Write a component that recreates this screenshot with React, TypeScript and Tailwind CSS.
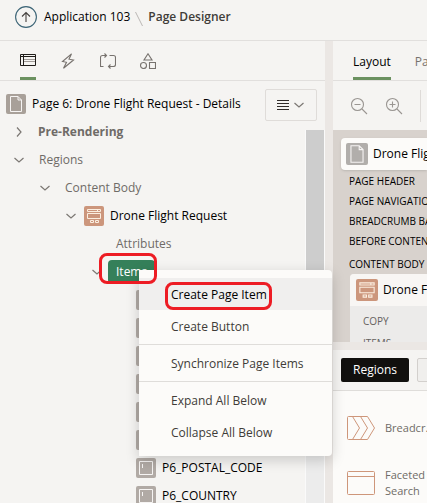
import type { ReactNode } from "react";

const line = { fill: "none", stroke: "currentColor" } as const;

function Chevron({ open }: { open: boolean }) {
  return (
    <svg className="block size-3 text-[#7b7773]" viewBox="0 0 12 12" {...line} strokeWidth="1.2">
      <path d={open ? "M1.5 4 6 8 10.5 4" : "M4 1.5 8 6 4 10.5"} />
    </svg>
  );
}

function PageIcon({ className }: { className: string }) {
  return (
    <svg className={`block shrink-0 rounded-xs text-[#f6f4f3] ${className}`} viewBox="0 0 20 20" {...line}>
      <path d="M4.500 2.500h7.500l3.500 3.500v11.500h-11zM12 2.500v3.500h3.500" />
    </svg>
  );
}

function RegionIcon({ className }: { className: string }) {
  return (
    <svg className={`block shrink-0 rounded-xs bg-[#cc967c] text-[#fbeee0] ${className}`} viewBox="0 0 20 20" {...line}>
      <path d="M3.500 3.500h13v2h-13zM13.500 3.500v2M3.500 7.500h13v5h-13zM6.500 14.500h3v2h-3zM11.500 14.500h3v2h-3z" />
    </svg>
  );
}

function FieldIcon() {
  return (
    <svg className="block size-5 shrink-0 rounded-xs bg-[#b1aaa5] text-[#f6f4f3]" viewBox="0 0 20 20" {...line}>
      <path d="M3.500 3.500h13v13h-13zM6.500 6v4" />
    </svg>
  );
}

function TreeRow({ indent, children }: { indent: string; children: ReactNode }) {
  return <li className={`flex h-7 items-center whitespace-nowrap ${indent}`}>{children}</li>;
}

const fields = ["", "", "", "", "", "", "P6_POSTAL_CODE", "P6_COUNTRY"];
const slots = ["PAGE HEADER", "PAGE NAVIGATION", "BREADCRUMB BAR", "BEFORE CONTENT BODY"];

function Header() {
  return (
    <header className="flex h-[41px] shrink-0 items-center border-b border-[#e1dfdd] pb-1.5 pl-[15px] whitespace-nowrap">
      <button aria-label="Up" className="text-[#3c6476]">
        <svg className="block size-[22px]" viewBox="0 0 22 22" {...line} strokeWidth="1.1">
          <circle cx="11" cy="11" r="10.4" />
          <path stroke="#45413e" d="M11 16V6.500M7 10.500l4-4 4 4" />
        </svg>
      </button>
      <a href="#app" className="ml-[7px] text-black">Application 103</a>
      <svg className="mx-[5px] mt-1 h-4 w-2 shrink-0" viewBox="0 0 8 16" {...line} stroke="#bab7b4">
        <path d="M.5 1 7.500 15" />
      </svg>
      <span className="font-semibold text-[#403c38]">Page Designer</span>
    </header>
  );
}

function TreePanel() {
  const toggle = "w-[26px] shrink-0";
  return (
    <section className="flex w-[325px] shrink-0 flex-col overflow-hidden">
      <nav className="flex h-10 shrink-0 gap-6 border-b border-[#e1dfdd] pl-5 text-[#77726e]">
        <button aria-label="Rendering" className="h-[39px] w-4 border-b-3 border-[#6b9160] pt-0.5 text-[#201d1a]">
          <svg className="block size-4" viewBox="0 0 16 16" {...line}>
            <path d="M.5 2.500h15v11H.5zM.5 4.500h15M3.500 2.500v11" />
            <path stroke="#a09b97" d="M4 7.500h11M4 9.500h11" />
          </svg>
        </button>
        <button aria-label="Dynamic Actions" className="w-4">
          <svg className="block size-4" viewBox="0 0 16 16" {...line} strokeWidth="1.1">
            <path d="M11.500.8 2.500 8.500l4 .8-3 5.900 10-8.200-4.500-.8z" />
          </svg>
        </button>
        <button aria-label="Processing" className="w-4">
          <svg className="block size-4" viewBox="0 0 16 16" {...line} strokeWidth="1.1">
            <path d="M3.500 13.500h-3v-9q0-2 2-2h4M4.500.5l2 2-2 2M9.500 2.500h4q2 0 2 2v7q0 2-2 2h-5M10.500 11.500l-2 2 2 2" />
          </svg>
        </button>
        <button aria-label="Page Shared Components" className="w-4">
          <svg className="block size-4" viewBox="0 0 16 16" {...line} strokeWidth="1.1">
            <path d="M8 .8 12 7H4zM9.500 9.500h6v6h-6z" />
            <circle cx="3.500" cy="12.500" r="3" />
          </svg>
        </button>
      </nav>
      <div className="flex min-h-0 flex-1">
        <ul className="min-w-0 flex-1 pt-[9px] text-[#6f6b67]">
          <TreeRow indent="pl-1.5">
            <PageIcon className="size-5 bg-[#a8a099]" />
            <span className="ml-1.5 text-black">Page 6: Drone Flight Request - Details</span>
          </TreeRow>
          <TreeRow indent="pl-[13px]">
            <button aria-label="Expand" className="w-[25px] shrink-0"><Chevron open={false} /></button>
            <span className="font-bold">Pre-Rendering</span>
          </TreeRow>
          <TreeRow indent="pl-[13px]">
            <button aria-label="Collapse" className={toggle}><Chevron open /></button>Regions
          </TreeRow>
          <TreeRow indent="pl-[39px]">
            <button aria-label="Collapse" className={toggle}><Chevron open /></button>Content Body
          </TreeRow>
          <TreeRow indent="pl-[65px]">
            <button aria-label="Collapse" className="w-[19px] shrink-0"><Chevron open /></button>
            <RegionIcon className="size-5" />
            <span className="ml-1.5 text-black">Drone Flight Request</span>
          </TreeRow>
          <TreeRow indent="pl-[116px]">Attributes</TreeRow>
          <TreeRow indent="pl-[91px]">
            <button aria-label="Collapse" className="w-[17px] shrink-0"><Chevron open /></button>
            <span className="flex h-6 items-center rounded bg-[#35805a] px-2 text-white">Items</span>
          </TreeRow>
          {fields.map((name, i) => (
            <TreeRow key={i} indent="pl-[136px]">
              <FieldIcon />
              <span className="ml-1.5 text-black">{name}</span>
            </TreeRow>
          ))}
        </ul>
        <div className="flex w-[60px] shrink-0 flex-col gap-[9px] pt-2">
          <button aria-label="Tree options" className="flex h-8 w-[52px] shrink-0 items-center justify-center gap-1 rounded-xs border border-[#dfdcd9] text-[#302c29]">
            <svg className="size-3" viewBox="0 0 12 12" {...line}>
              <path d="M0 1.500h12M0 4.500h12M0 7.500h12M0 10.500h12" />
            </svg>
            <Chevron open />
          </button>
          <div className="w-5 flex-1 self-end border-x border-[#fafafa] bg-[#ececec]">
            <div className="h-4/5 bg-[#cdcdcd]" />
          </div>
        </div>
      </div>
    </section>
  );
}

function Zoom({ plus }: { plus?: boolean }) {
  return (
    <button aria-label={plus ? "Zoom in" : "Zoom out"} className="text-[#9a9692]">
      <svg className="block size-[18px]" viewBox="0 0 18 18" {...line} strokeWidth="1.1">
        <circle cx="7.500" cy="7.500" r="6" />
        <path d={plus ? "M12 12l5 5M4.500 7.500h6M7.500 4.500v6" : "M12 12l5 5M4.500 7.500h6"} />
      </svg>
    </button>
  );
}

function LayoutPanel() {
  return (
    <section className="flex min-w-0 flex-1 flex-col overflow-hidden whitespace-nowrap">
      <nav className="flex h-10 shrink-0 gap-6 border-b border-[#e1dfdd] pl-5">
        <button className="h-[39px] border-b-3 border-[#6b9160] pt-1.5 text-black">Layout</button>
        <button className="h-[39px] border-b-3 border-transparent pt-1.5 text-[#77726e]">Page Search</button>
      </nav>
      <div className="flex h-[49px] shrink-0 items-center gap-[17px] pl-[17px]">
        <Zoom />
        <Zoom plus />
        <div className="h-8 w-px shrink-0 bg-[#dedbd8]" />
      </div>
      <div className="h-[212px] shrink-0 overflow-hidden bg-[#d8d2cd] pt-2 pl-2 text-black">
        <div className="flex h-8 items-center rounded-l bg-[#fcfbf9] pl-[5px] shadow-sm">
          <PageIcon className="size-[22px] bg-[#b1aeab]" />
          <span className="ml-[5px]">Drone Flight Request - Details</span>
        </div>
        <ul className="pt-px pl-2 text-[10px] leading-5">
          {slots.map((slot) => <li key={slot}>{slot}</li>)}
          <li className="pt-[3px]">CONTENT BODY</li>
        </ul>
        <div className="ml-[9px] rounded-l bg-[#ecebea]">
          <div className="flex h-8 items-center rounded-tl bg-[#f8f6f4] pl-1.5">
            <RegionIcon className="size-[22px]" />
            <span className="ml-[5px]">Drone Flight Request</span>
          </div>
          <ul className="pt-1 pl-[13px] text-[10px] leading-[22px] text-[#65615d]">
            <li>COPY</li>
            <li>ITEMS</li>
          </ul>
        </div>
      </div>
      <div className="h-2 shrink-0 bg-[#ebe7e4]" />
      <div className="flex h-[41px] shrink-0 items-center gap-2 border-b border-[#dfddda] pl-2">
        <button className="h-6 w-[68px] shrink-0 rounded-xs bg-[#11100e] text-white">Regions</button>
        <button className="h-6 shrink-0 rounded-xs border border-[#d3d0cd] bg-[#f0efed] px-3">Items</button>
      </div>
      <ul className="flex-1 bg-[#fcfbf9] text-[11px] leading-4 text-[#6f6b67]">
        <li className="flex h-[74px] items-center gap-2.5 pl-[14px]">
          <svg className="h-6 w-7 shrink-0 text-[#ce967a]" viewBox="0 0 28 24" {...line}>
            <path d="M1.500.5h19l7 11.500-7 11.500h-19q-1 0-1-1v-21q0-1 1-1zM5.500.5l7 11.500-7 11.500M13.500.5l7 11.500-7 11.500" />
          </svg>
          Breadcr...
        </li>
        <li className="flex h-9 items-center gap-2.5 pl-[14px]">
          <svg className="h-6 w-7 shrink-0 text-[#ce967a]" viewBox="0 0 28 24" {...line}>
            <rect x=".5" y=".5" width="27" height="23" rx="1" />
            <path d="M.5 5.500h27" />
          </svg>
          <span>Faceted<br />Search</span>
        </li>
      </ul>
    </section>
  );
}

function ContextMenu() {
  const item = "block h-8 w-full pt-0.5 pl-8 text-left";
  const rule = "my-0.5 border-[#dfddda]";
  return (
    <div role="menu" className="absolute top-[270px] left-[139px] w-[193px] rounded-r bg-[#fcfbf9] py-2 text-[#403c38] shadow-[0_4px_14px_rgba(0,0,0,0.18)]">
      <button role="menuitem" className={`${item} bg-[#f0efee] text-black`}>Create Page Item</button>
      <button role="menuitem" className={item}>Create Button</button>
      <hr className={rule} />
      <button role="menuitem" className={item}>Synchronize Page Items</button>
      <hr className={rule} />
      <button role="menuitem" className={item}>Expand All Below</button>
      <button role="menuitem" className={item}>Collapse All Below</button>
    </div>
  );
}

export default function App() {
  return (
    <div className="relative flex h-screen flex-col overflow-hidden bg-[#f5f4f2] font-['Open_Sans',sans-serif] text-[12px] leading-4">
      <Header />
      <main className="flex min-h-0 flex-1">
        <TreePanel />
        <div className="w-2 shrink-0 bg-[#ebe7e4]" />
        <LayoutPanel />
      </main>
      <ContextMenu />
      <div className="pointer-events-none absolute top-[253px] left-[99px] h-[31px] w-[58px] rounded-lg border-3 border-[#ed1c24]" />
      <div className="pointer-events-none absolute top-[282px] left-[165px] h-[28px] w-[107px] rounded-lg border-3 border-[#ed1c24]" />
    </div>
  );
}
